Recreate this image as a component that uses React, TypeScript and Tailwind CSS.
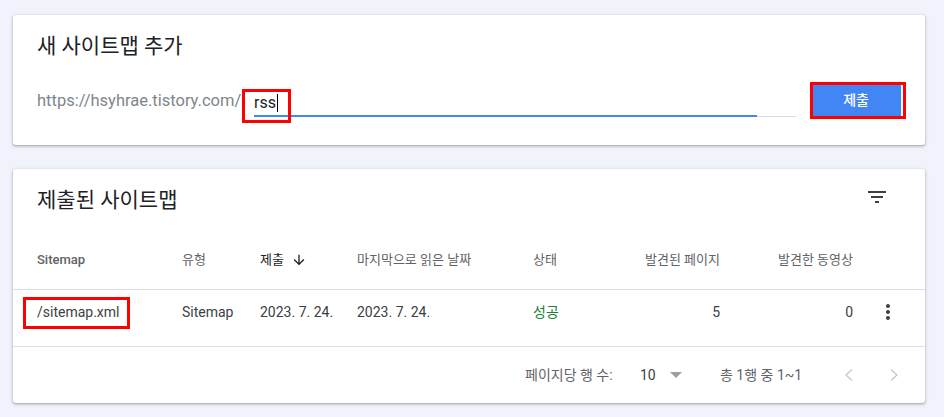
const card =
  'relative w-[912px] bg-white rounded-[3px] shadow-[0_1px_2px_0_rgba(60,64,67,0.3),0_1px_3px_1px_rgba(60,64,67,0.15)]';

function FilterIcon() {
  return (
    <svg width="24" height="24" viewBox="0 0 24 24" className="fill-[#3c4043]">
      <path d="M10 18h4v-2h-4v2zM3 6v2h18V6H3zm3 7h12v-2H6v2z" />
    </svg>
  );
}

function MoreVert() {
  return (
    <svg width="24" height="24" viewBox="0 0 24 24" className="fill-[#3c4043]">
      <path d="M12 8c1.1 0 2-.9 2-2s-.9-2-2-2-2 .9-2 2 .9 2 2 2zm0 2c-1.1 0-2 .9-2 2s.9 2 2 2 2-.9 2-2-.9-2-2-2zm0 6c-1.1 0-2 .9-2 2s.9 2 2 2 2-.9 2-2-.9-2-2-2z" />
    </svg>
  );
}

function ArrowDown() {
  return (
    <svg width="16" height="16" viewBox="0 0 24 24" className="fill-[#202124]">
      <path d="M20 12l-1.41-1.41L13 16.17V4h-2v12.17l-5.58-5.59L4 12l8 8 8-8z" />
    </svg>
  );
}

const grid = 'grid grid-cols-[145px_78px_97px_176px_67px_120px_133px_1fr] pl-6';

export default function App() {
  return (
    <div className="w-[944px] h-[417px] bg-[#f0f3fb] pt-[15px] pl-[13px] font-[Roboto,'Noto_Sans_CJK_KR',sans-serif] overflow-hidden">
      {/* 새 사이트맵 추가 */}
      <div className={`${card} h-[130px] px-6`}>
        <h2 className="pt-[15px] text-[21px] leading-[32px] text-[#202124]">새 사이트맵 추가</h2>
        <div className="mt-[22px] flex items-center h-[33px]">
          <span className="w-[217px] shrink-0 text-[16.5px] leading-[20px] text-[#80868b] whitespace-nowrap">
            https://hsyhrae.tistory.com/
          </span>
          <div className="w-[543px] h-[33px] flex flex-col justify-between">
            <div className="pt-[9px] flex items-center text-[16px] leading-[20px] text-[#202124]">
              rss
              <span className="ml-[1px] w-px h-[18px] bg-black" />
            </div>
            <div className="flex items-end h-[2px]">
              <div className="w-[503px] h-[2px] bg-[#4285f4]" />
              <div className="flex-1 h-px bg-[#dadce0]" />
            </div>
          </div>
          <button className="ml-[15px] w-[90px] h-[33px] rounded-[2px] bg-[#4285f4] text-white text-[14px] font-medium shadow-[0_1px_2px_rgba(60,64,67,0.3)]">
            제출
          </button>
        </div>
        <div className="absolute left-[229px] top-[74px] w-[49px] h-[34px] border-[3px] border-[#ff0000]" />
        <div className="absolute left-[797px] top-[67px] w-[96px] h-[37px] border-[3px] border-[#ff0000]" />
      </div>

      {/* 제출된 사이트맵 */}
      <div className={`${card} mt-6 h-[234px]`}>
        <div className="h-[62px] flex items-center justify-between pl-6 pr-[36px]">
          <h2 className="text-[21px] leading-[32px] text-[#202124]">제출된 사이트맵</h2>
          <div className="mb-[6px]">
            <FilterIcon />
          </div>
        </div>

        <div className={`${grid} h-[59px] items-center border-b border-[#e0e0e0] text-[13px] text-[#5f6368]`}>
          <span className="font-medium">Sitemap</span>
          <span>유형</span>
          <span className="flex items-center text-[#202124]">
            제출
            <span className="ml-[7px]">
              <ArrowDown />
            </span>
          </span>
          <span>마지막으로 읽은 날짜</span>
          <span>상태</span>
          <span className="text-right">발견된 페이지</span>
          <span className="text-right">발견한 동영상</span>
          <span />
        </div>

        <div className="h-[57px] border-b border-[#e0e0e0]">
          <div className={`${grid} h-[44px] items-center text-[14px] text-[#3c4043]`}>
            <span>/sitemap.xml</span>
            <span>Sitemap</span>
            <span>2023. 7. 24.</span>
            <span>2023. 7. 24.</span>
            <span className="text-[#188038]">성공</span>
            <span className="text-right">5</span>
            <span className="text-right">0</span>
            <span className="pl-[23px]">
              <MoreVert />
            </span>
          </div>
        </div>

        <div className="h-[56px] flex items-center pl-[512px] text-[14px] text-[#5f6368]">
          <span className="w-[115px] whitespace-nowrap">페이지당 행 수:</span>
          <span className="w-[30px] text-[#3c4043]">10</span>
          <svg width="12" height="6" viewBox="0 0 12 6" className="fill-[#9aa0a6]">
            <polygon points="0,0 12,0 6,6" />
          </svg>
          <span className="ml-[38px] w-[125px] whitespace-nowrap">총 1행 중 1~1</span>
          <svg width="8" height="12" viewBox="0 0 8 12" className="stroke-[#c4c7ca] fill-none">
            <polyline points="7,0.5 1,6 7,11.5" strokeWidth="1.3" />
          </svg>
          <svg width="8" height="12" viewBox="0 0 8 12" className="ml-[37px] stroke-[#c4c7ca] fill-none">
            <polyline points="1,0.5 7,6 1,11.5" strokeWidth="1.3" />
          </svg>
        </div>

        <div className="absolute left-[10px] top-[128px] w-[107px] h-[32px] border-[3px] border-[#ff0000]" />
      </div>
    </div>
  );
}
